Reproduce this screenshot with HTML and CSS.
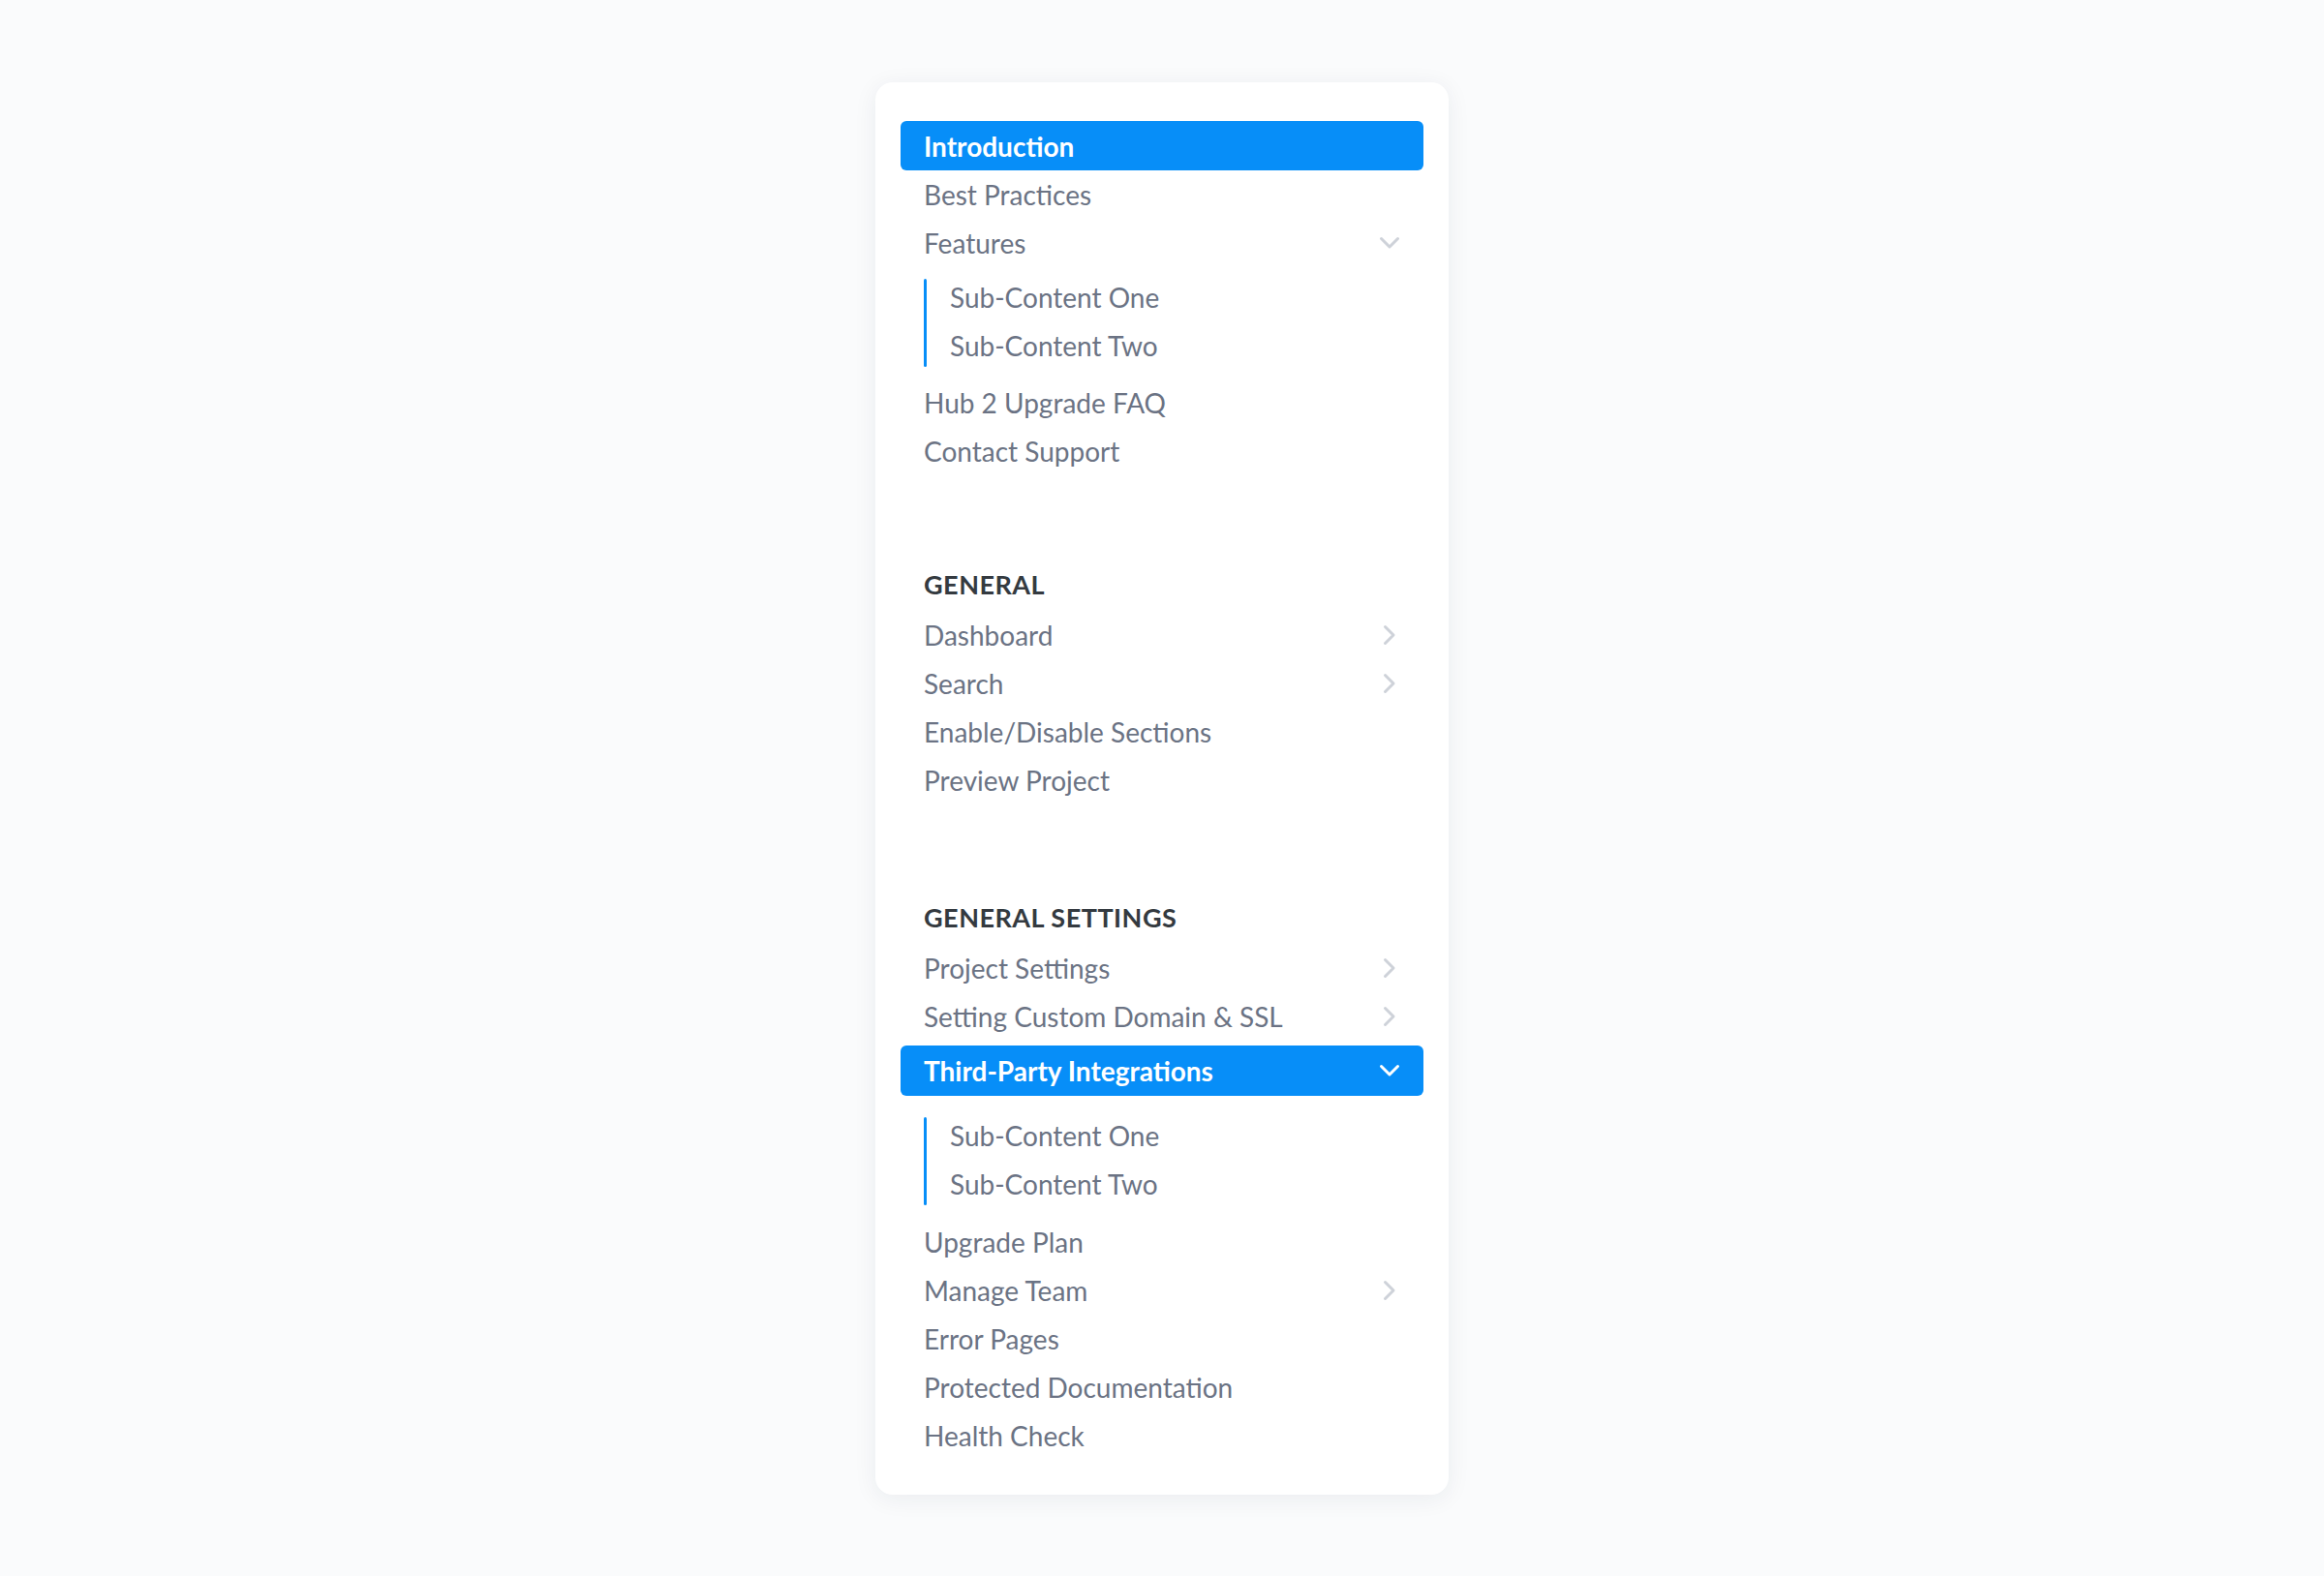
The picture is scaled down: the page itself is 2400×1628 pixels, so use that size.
FILE: index.html
```html
<!DOCTYPE html>
<html lang="en">
<head>
    <meta charset="UTF-8">
    <meta name="viewport" content="width=device-width, initial-scale=1.0">
    <title>Docs Sidebar</title>
    <link rel="stylesheet" href="styles.css">
</head>
<body>
    <nav class="sidebar">
        <ul class="nav-list">
            <li><a class="nav-item active" href="#">Introduction</a></li>
            <li><a class="nav-item" href="#">Best Practices</a></li>
            <li class="nav-group">
                <a class="nav-item" href="#">Features
                    <svg class="chevron" viewBox="0 0 22 22"><polyline points="2.5,6.5 11,15 19.5,6.5"/></svg>
                </a>
                <ul class="sub-list">
                    <li><a class="sub-item" href="#">Sub-Content One</a></li>
                    <li><a class="sub-item" href="#">Sub-Content Two</a></li>
                </ul>
            </li>
            <li><a class="nav-item" href="#">Hub 2 Upgrade FAQ</a></li>
            <li><a class="nav-item" href="#">Contact Support</a></li>
        </ul>

        <div class="nav-section">
            <h3 class="section-title">GENERAL</h3>
            <ul class="nav-list">
                <li><a class="nav-item" href="#">Dashboard
                    <svg class="chevron" viewBox="0 0 22 22"><polyline points="6.5,2.5 15,11 6.5,19.5"/></svg>
                </a></li>
                <li><a class="nav-item" href="#">Search
                    <svg class="chevron" viewBox="0 0 22 22"><polyline points="6.5,2.5 15,11 6.5,19.5"/></svg>
                </a></li>
                <li><a class="nav-item" href="#">Enable/Disable Sections</a></li>
                <li><a class="nav-item" href="#">Preview Project</a></li>
            </ul>
        </div>

        <div class="nav-section">
            <h3 class="section-title">GENERAL SETTINGS</h3>
            <ul class="nav-list">
                <li><a class="nav-item" href="#">Project Settings
                    <svg class="chevron" viewBox="0 0 22 22"><polyline points="6.5,2.5 15,11 6.5,19.5"/></svg>
                </a></li>
                <li><a class="nav-item" href="#">Setting Custom Domain &amp; SSL
                    <svg class="chevron" viewBox="0 0 22 22"><polyline points="6.5,2.5 15,11 6.5,19.5"/></svg>
                </a></li>
                <li class="nav-group">
                    <a class="nav-item active open" href="#">Third-Party Integrations
                        <svg class="chevron" viewBox="0 0 22 22"><polyline points="2.5,6.5 11,15 19.5,6.5"/></svg>
                    </a>
                    <ul class="sub-list">
                        <li><a class="sub-item" href="#">Sub-Content One</a></li>
                        <li><a class="sub-item" href="#">Sub-Content Two</a></li>
                    </ul>
                </li>
                <li><a class="nav-item" href="#">Upgrade Plan</a></li>
                <li><a class="nav-item" href="#">Manage Team
                    <svg class="chevron" viewBox="0 0 22 22"><polyline points="6.5,2.5 15,11 6.5,19.5"/></svg>
                </a></li>
                <li><a class="nav-item" href="#">Error Pages</a></li>
                <li><a class="nav-item" href="#">Protected Documentation</a></li>
                <li><a class="nav-item" href="#">Health Check</a></li>
            </ul>
        </div>
    </nav>
</body>
</html>
```

FILE: styles.css
```css
* {
    box-sizing: border-box;
    font-family: 'Lato', 'Open Sans', sans-serif;
}

body {
    margin: 0;
    padding: 85px 0 60px;
    background-color: #fafbfc;
    display: flex;
    justify-content: center;
    min-height: 100vh;
}

.sidebar {
    background-color: white;
    border-radius: 18px;
    box-shadow: 0 4px 24px rgba(30, 40, 70, 0.07);
    padding: 40px 26px 36px;
    width: 592px;
    align-self: flex-start;
}

ul {
    list-style: none;
    margin: 0;
    padding: 0;
}

.nav-list, .nav-group {
    display: flex;
    flex-direction: column;
}

.nav-item {
    display: flex;
    align-items: center;
    justify-content: space-between;
    height: 50px;
    padding: 0 24px;
    border-radius: 6px;
    font-size: 28px;
    color: #6b7384;
    text-decoration: none;
}

.nav-item.active {
    height: 51px;
    background-color: #078ef8;
    color: white;
    font-weight: 700;
}

.nav-item.active.open {
    height: 52px;
    margin: 5px 0 10px;
}

.chevron {
    width: 22px;
    height: 22px;
    fill: none;
    stroke: #ced2d9;
    stroke-width: 3;
    stroke-linecap: round;
    stroke-linejoin: round;
}

.active .chevron {
    stroke: white;
}

.sub-list {
    position: relative;
    margin: 6px 0 9px 24px;
}

.open + .sub-list {
    margin-bottom: 10px;
}

.sub-list::before {
    content: "";
    position: absolute;
    left: 0;
    top: 6px;
    bottom: 3px;
    width: 3px;
    border-radius: 2px;
    background-color: #078ef8;
}

.sub-item {
    display: flex;
    align-items: center;
    height: 50px;
    padding-left: 27px;
    font-size: 28px;
    color: #6b7384;
    text-decoration: none;
}

.nav-section {
    margin-top: 87px;
}

.nav-section + .nav-section {
    margin-top: 91px;
}

.section-title {
    margin: 0 0 1px;
    height: 52px;
    line-height: 52px;
    padding-left: 24px;
    font-size: 27px;
    font-weight: 700;
    color: #343a40;
    letter-spacing: 0.5px;
}
```
